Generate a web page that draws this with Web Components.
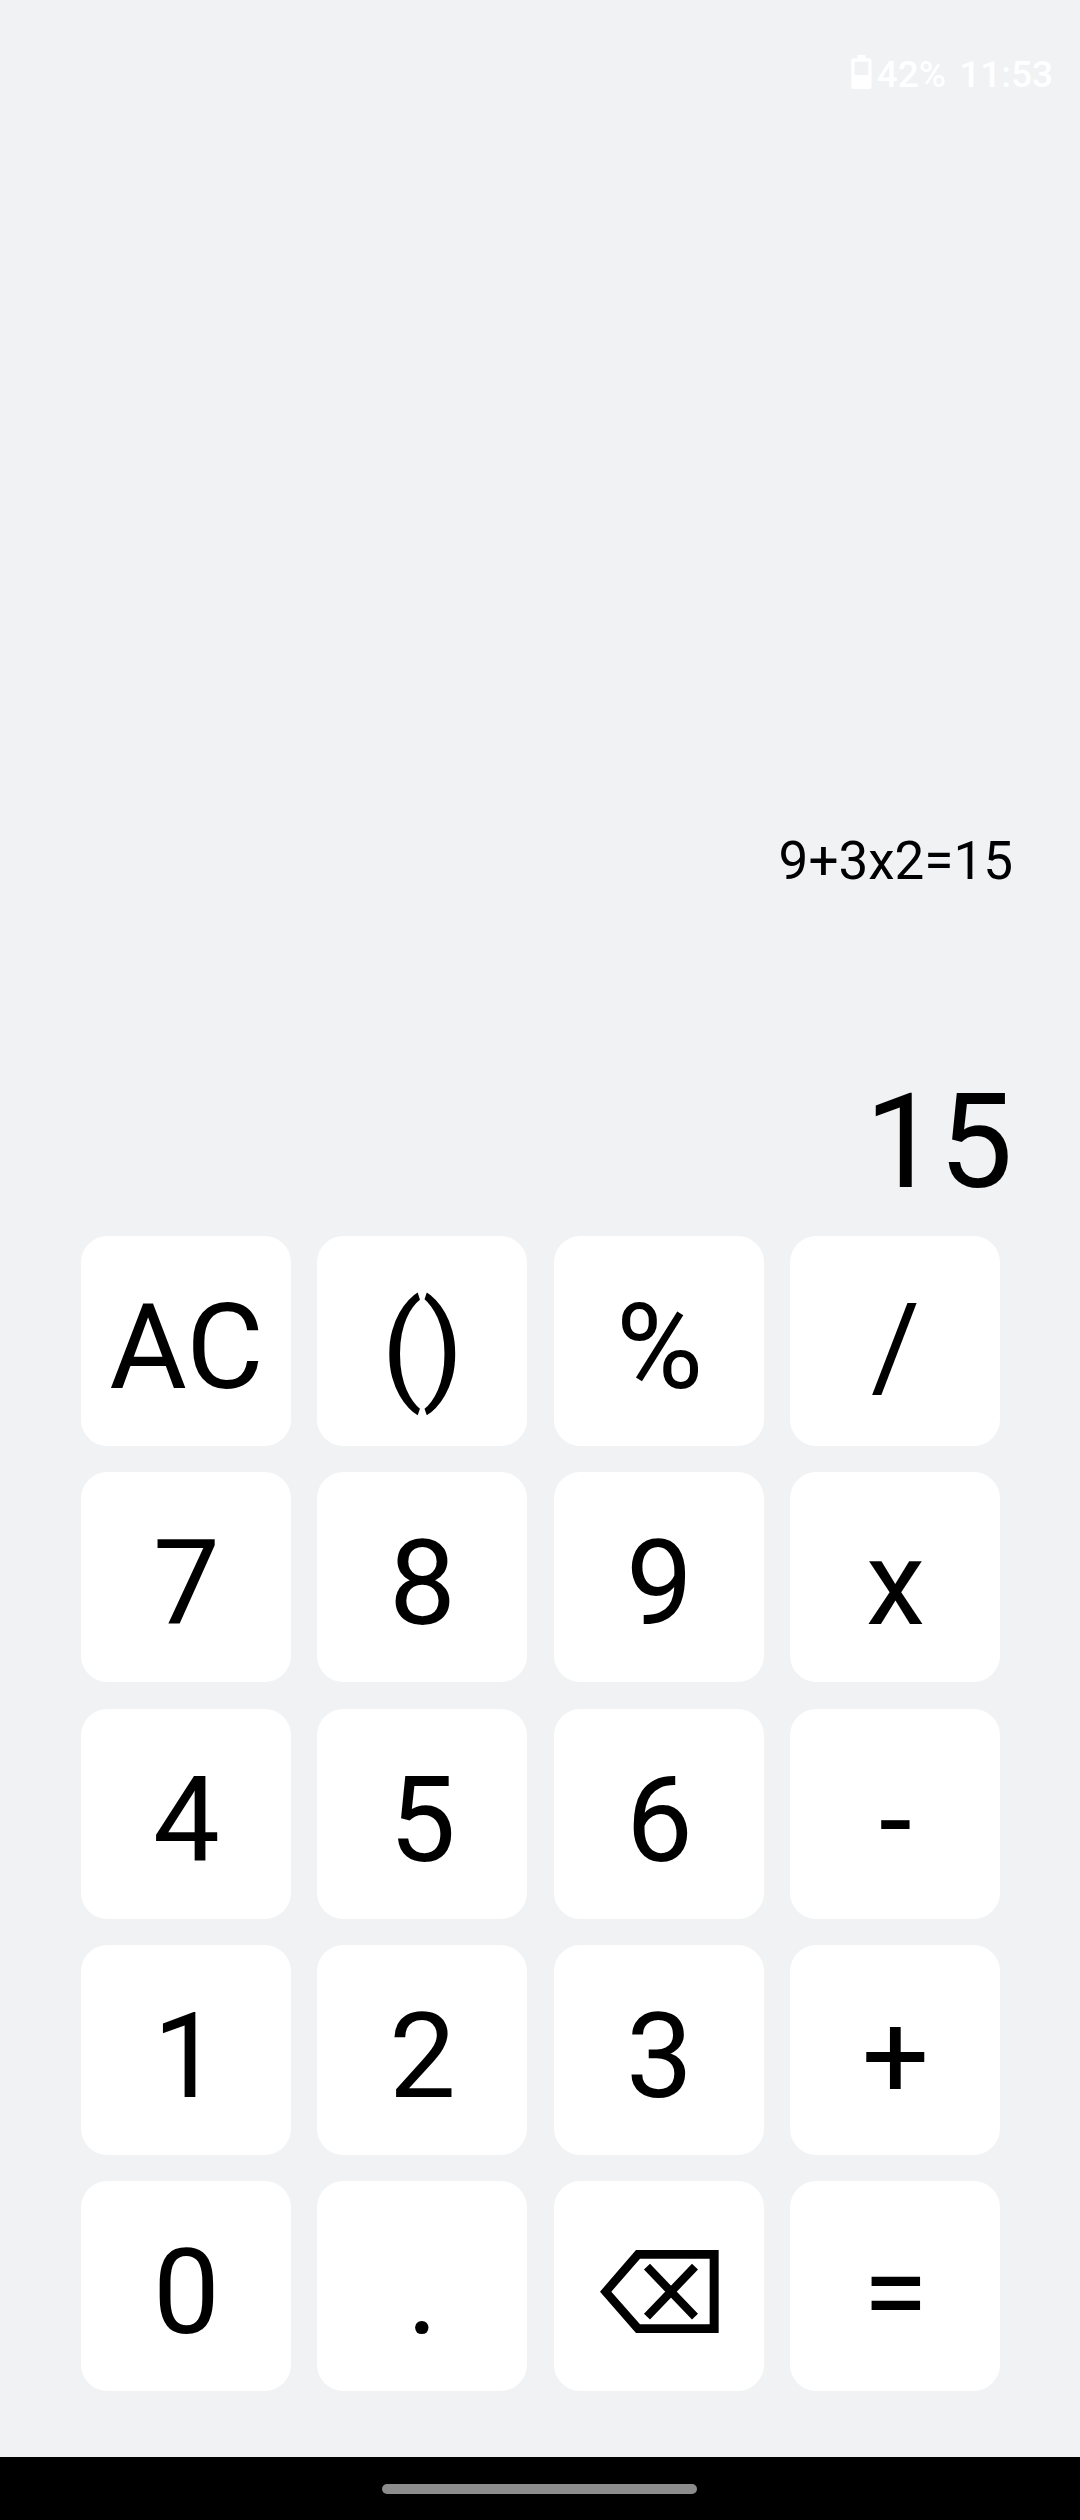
<!DOCTYPE html>
<html lang="en">
<head>
<meta charset="utf-8">
<title>Calculator</title>
<style>
html,body{margin:0;background:#f0f2f4}
</style>
</head>
<body>
<calc-app></calc-app>
<script>
const define = (name, html) => customElements.define(name, class extends HTMLElement {
  constructor() {
    super();
    this.attachShadow({ mode: "open" }).innerHTML = html;
  }
});

define("status-bar", `
<style>
:host{display:flex;justify-content:flex-end;box-sizing:border-box;height:118px;padding:55px 27px 0 0;color:#fff;font-size:37px;font-weight:500;line-height:40px}
svg{display:block;flex:none;margin-right:5px}
.time{margin-left:13px}
</style>
<svg width="21" height="34" viewBox="0 0 21 34"><path fill="#fff" fill-rule="evenodd" d="M6.3 0h8.2v3.2h3.8a2.2 2.2 0 0 1 2.2 2.2v26.4a2.2 2.2 0 0 1-2.2 2.2H2.5a2.2 2.2 0 0 1-2.2-2.2V5.400a2.200 2.200 0 0 1 2.200-2.200h3.800zM3.500 6.700v13.300h13.800v-13.300z"/></svg>
<span>42%</span><span class="time">11:53</span>`);

define("calc-display", `
<style>
:host{display:flex;flex-direction:column;align-items:flex-end;box-sizing:border-box;height:1118px;padding:712px 67px 0 0}
.expression{font-size:53px;line-height:63px}
.result{font-size:132px;line-height:154px;margin-top:172px}
</style>
<div class="expression"><slot name="expression"></slot></div>
<div class="result"><slot name="result"></slot></div>`);

define("calc-key", `
<style>
:host{display:flex;align-items:center;justify-content:center;box-sizing:border-box;width:210px;height:210px;padding:13px 0 0 1px;border-radius:26.25px;background:#fff;font-size:119px;line-height:138px}
</style>
<slot></slot>`);

define("backspace-icon", `
<style>
:host{display:block;margin:-2px 0 0}
svg{display:block}
</style>
<svg width="118.67" height="83" viewBox="181 240 356 249"><path fill-rule="evenodd" d="M181 365 289 240H537V489H289ZM215 365 301 463H510V266H301Z"/><path fill="none" stroke="#000" stroke-width="25" d="M322 290 466 440M466 290 322 440"/></svg>`);

define("calc-keypad", `
<style>
:host{display:grid;box-sizing:border-box;height:1221px;padding-left:81px;grid-template-columns:236px 237px 236px 210px;grid-template-rows:236px 237px 236px 236px 210px;align-content:start}
</style>
<slot></slot>`);

define("nav-bar", `
<style>
:host{display:flex;justify-content:center;box-sizing:border-box;height:63px;padding-top:27px;background:#000}
.handle{width:315px;height:10px;border-radius:5px;background:#8c8c8c;margin-left:-1px}
</style>
<div class="handle"></div>`);

define("calc-app", `
<style>
:host{display:flex;flex-direction:column;width:1080px;height:2520px;overflow:hidden;background:#f0f2f4;color:#000;font-family:Roboto,sans-serif}
</style>
<status-bar></status-bar>
<calc-display><span slot="expression">9+3x2=15</span><span slot="result">15</span></calc-display>
<calc-keypad>
<calc-key>AC</calc-key><calc-key>()</calc-key><calc-key>%</calc-key><calc-key>/</calc-key>
<calc-key>7</calc-key><calc-key>8</calc-key><calc-key>9</calc-key><calc-key>x</calc-key>
<calc-key>4</calc-key><calc-key>5</calc-key><calc-key>6</calc-key><calc-key>-</calc-key>
<calc-key>1</calc-key><calc-key>2</calc-key><calc-key>3</calc-key><calc-key>+</calc-key>
<calc-key>0</calc-key><calc-key>.</calc-key><calc-key><backspace-icon></backspace-icon></calc-key><calc-key>=</calc-key>
</calc-keypad>
<nav-bar></nav-bar>`);
</script>
</body>
</html>
